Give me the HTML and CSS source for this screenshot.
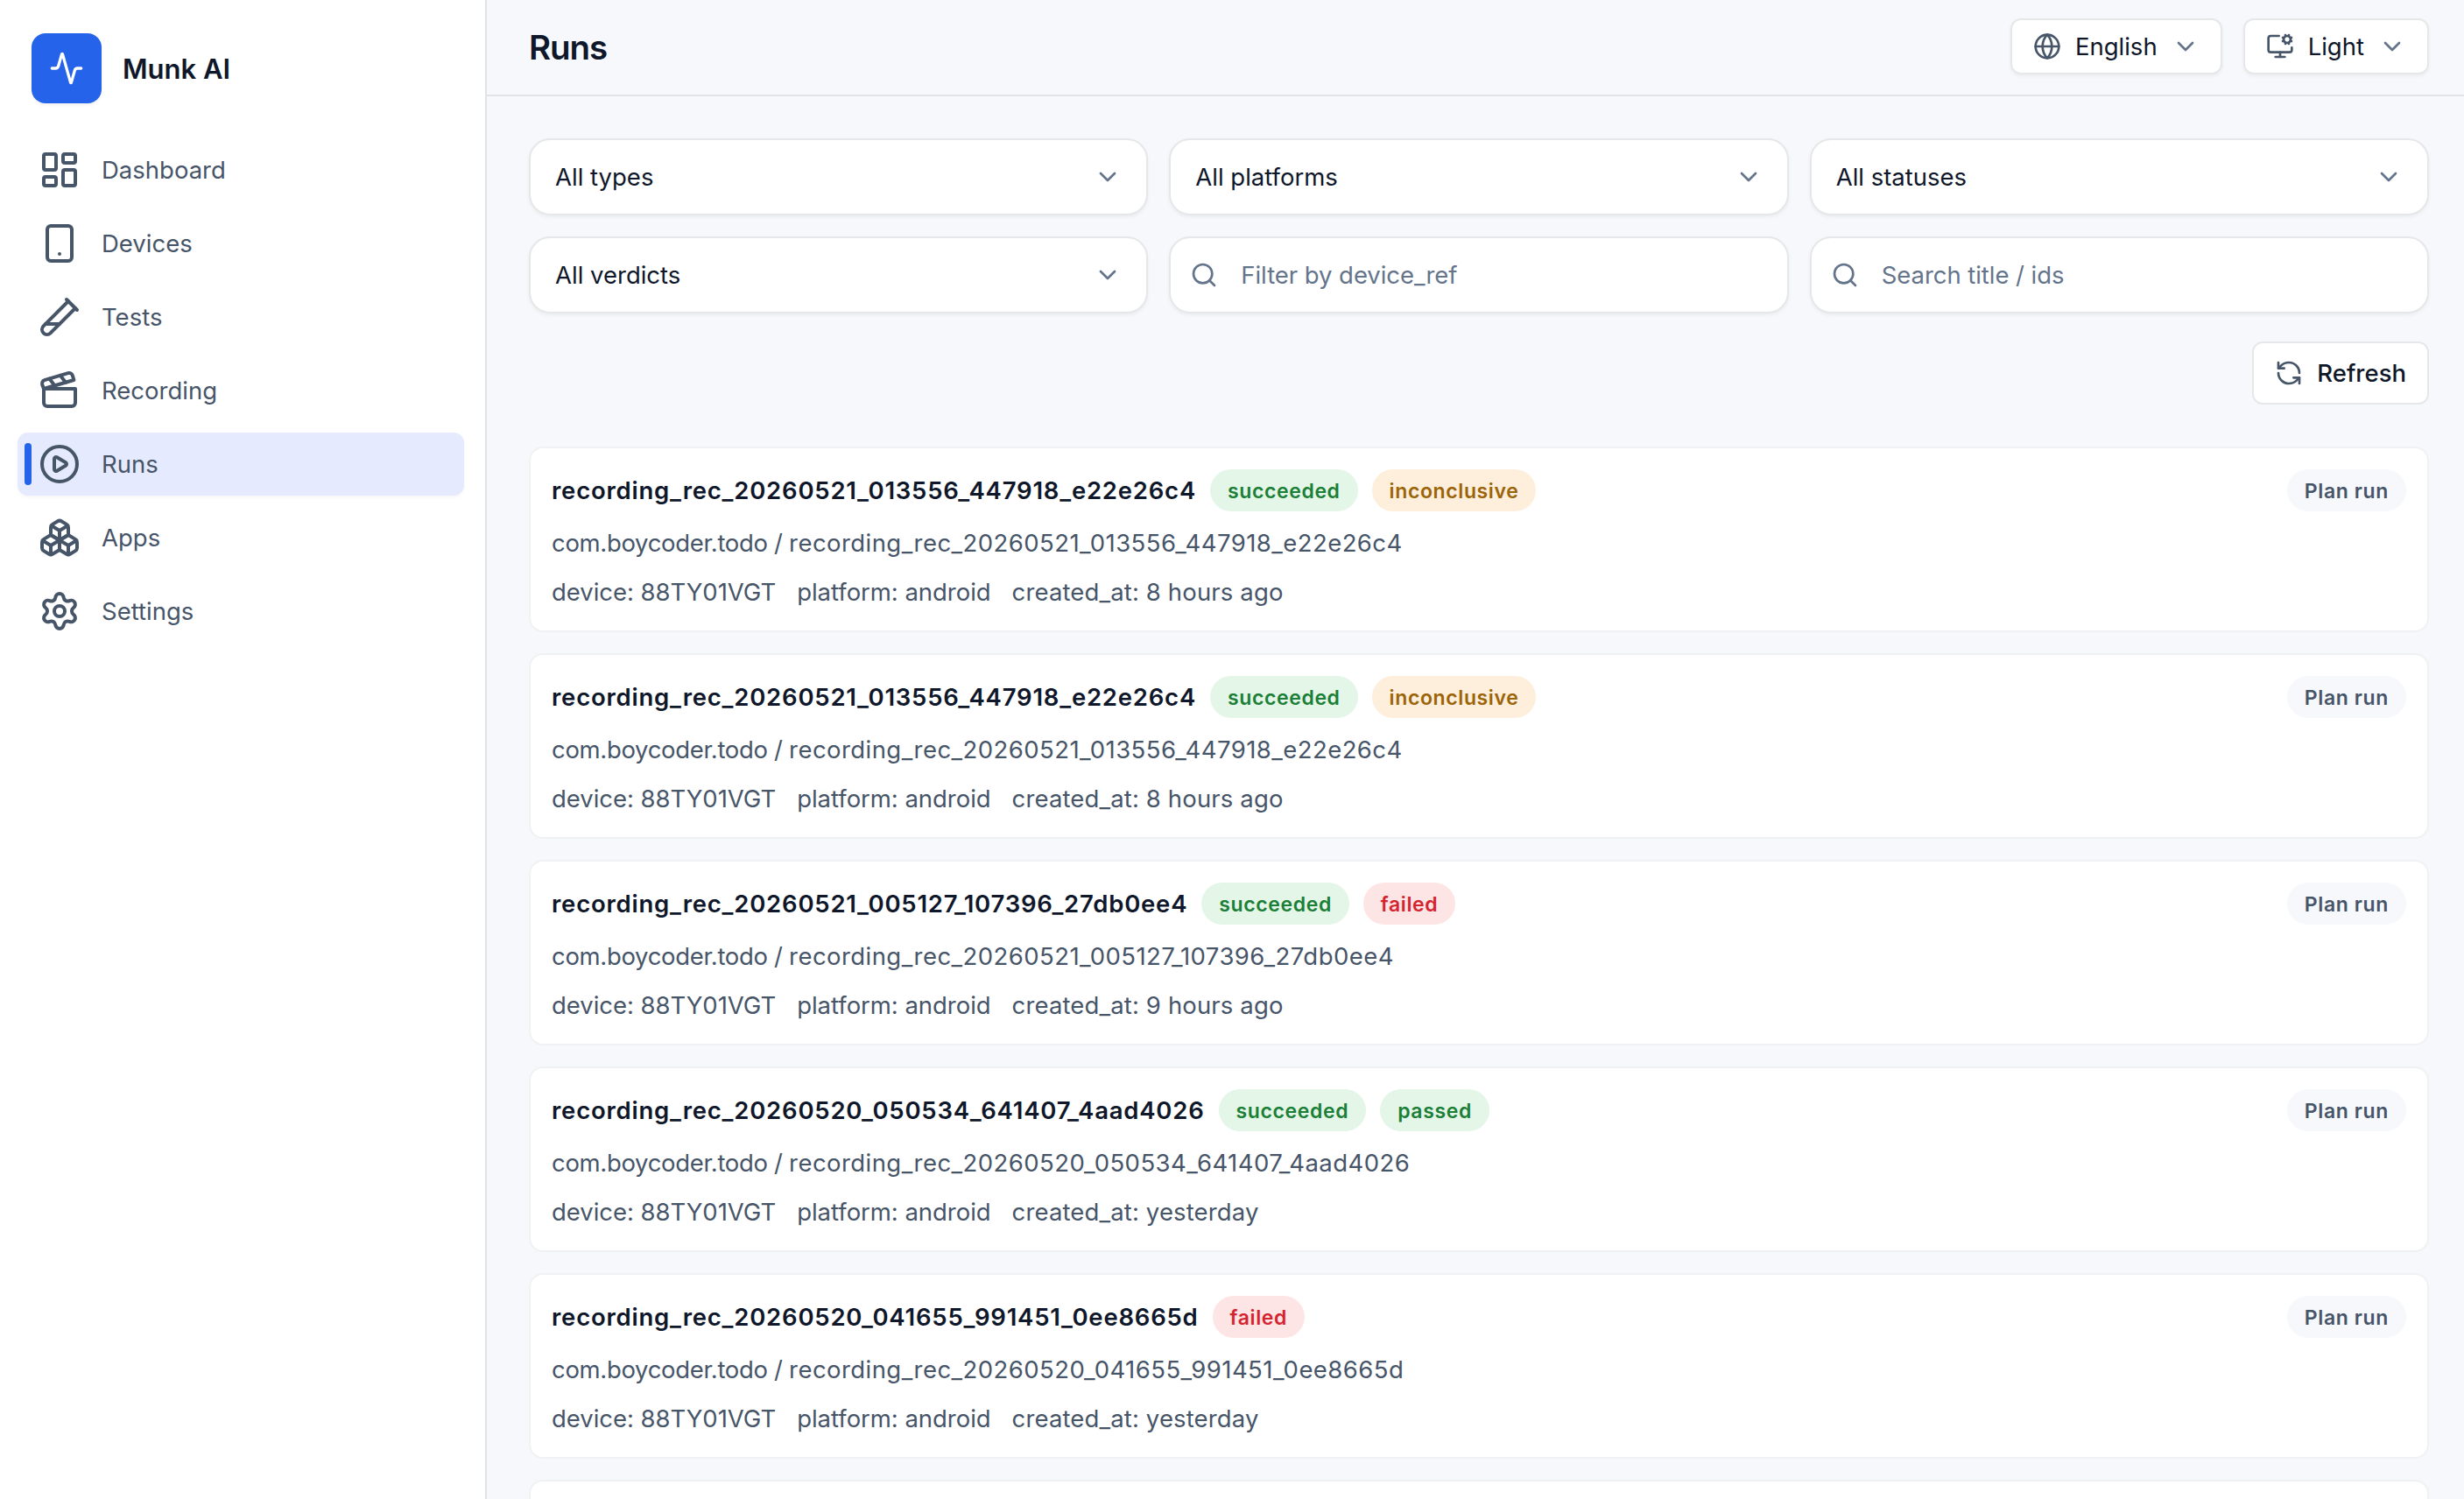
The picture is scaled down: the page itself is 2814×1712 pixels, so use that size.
FILE: index.html
```
<!DOCTYPE html>
<html lang="en">
<head>
    <meta charset="UTF-8">
    <title>Munk AI - Runs</title>
    <link rel="stylesheet" href="styles.css">
</head>
<body>
<!-- shared icons -->
<svg class="icon-defs">
    <symbol id="chevron" viewBox="0 0 24 24"><path d="m6 9 6 6 6-6"/></symbol>
    <symbol id="search" viewBox="0 0 24 24"><circle cx="11" cy="11" r="8"/><path d="m21 21-4.34-4.34"/></symbol>
</svg>

<div class="app">
    <aside class="sidebar">
        <div class="brand">
            <div class="brand-logo">
                <svg class="icon icon-logo" viewBox="0 0 24 24"><path d="M22 12h-2.48a2 2 0 0 0-1.93 1.46l-2.35 8.36a.25.25 0 0 1-.48 0L9.24 2.18a.25.25 0 0 0-.48 0l-2.35 8.36A2 2 0 0 1 4.49 12H2"/></svg>
            </div>
            <span class="brand-name">Munk AI</span>
        </div>
        <nav class="nav">
            <a class="nav-item">
                <svg class="icon icon-nav" viewBox="0 0 24 24"><rect width="7" height="9" x="3" y="3" rx="1"/><rect width="7" height="5" x="14" y="3" rx="1"/><rect width="7" height="9" x="14" y="12" rx="1"/><rect width="7" height="5" x="3" y="16" rx="1"/></svg>
                <span>Dashboard</span>
            </a>
            <a class="nav-item">
                <svg class="icon icon-nav" viewBox="0 0 24 24"><rect width="14" height="20" x="5" y="2" rx="2"/><path d="M12 18h.01"/></svg>
                <span>Devices</span>
            </a>
            <a class="nav-item">
                <svg class="icon icon-nav" viewBox="0 0 24 24"><path d="M21 7 6.82 21.18a2.83 2.83 0 0 1-3.99-.01a2.83 2.83 0 0 1 0-4L17 3"/><path d="m16 2 6 6"/><path d="M12 16H4"/></svg>
                <span>Tests</span>
            </a>
            <a class="nav-item">
                <svg class="icon icon-nav" viewBox="0 0 24 24"><path d="M20.2 6 3 11l-.9-2.4c-.3-1.1.3-2.2 1.3-2.5l13.5-4c1.1-.3 2.2.3 2.5 1.3Z"/><path d="m6.2 5.3 3.1 3.9"/><path d="m12.4 3.4 3.1 4"/><path d="M3 11h18v8a2 2 0 0 1-2 2H5a2 2 0 0 1-2-2Z"/></svg>
                <span>Recording</span>
            </a>
            <a class="nav-item active">
                <svg class="icon icon-nav" viewBox="0 0 24 24"><circle cx="12" cy="12" r="10"/><path d="M9 9.003a1 1 0 0 1 1.517-.859l4.997 2.997a1 1 0 0 1 0 1.718l-4.997 2.997A1 1 0 0 1 9 14.996z"/></svg>
                <span>Runs</span>
            </a>
            <a class="nav-item">
                <svg class="icon icon-nav" viewBox="0 0 24 24"><path d="M2.97 12.92A2 2 0 0 0 2 14.63v3.24a2 2 0 0 0 .97 1.71l3 1.8a2 2 0 0 0 2.06 0L12 19v-5.5l-5-3-4.03 2.42Z"/><path d="m7 16.5-4.74-2.85"/><path d="m7 16.5 5-3"/><path d="M7 16.5v5.17"/><path d="M12 13.5V19l3.97 2.38a2 2 0 0 0 2.06 0l3-1.8a2 2 0 0 0 .97-1.71v-3.24a2 2 0 0 0-.97-1.71L17 10.5l-5 3Z"/><path d="m17 16.5-5-3"/><path d="m17 16.5 4.74-2.85"/><path d="M17 16.5v5.17"/><path d="M7.97 4.42A2 2 0 0 0 7 6.13v4.37l5 3 5-3V6.13a2 2 0 0 0-.97-1.71l-3-1.8a2 2 0 0 0-2.06 0l-3 1.8Z"/><path d="M12 8 7.26 5.15"/><path d="m12 8 4.74-2.85"/><path d="M12 13.5V8"/></svg>
                <span>Apps</span>
            </a>
            <a class="nav-item">
                <svg class="icon icon-nav" viewBox="0 0 24 24"><path d="M9.671 4.136a2.34 2.34 0 0 1 4.659 0 2.34 2.34 0 0 0 3.319 1.915 2.34 2.34 0 0 1 2.33 4.033 2.34 2.34 0 0 0 0 3.831 2.34 2.34 0 0 1-2.33 4.033 2.34 2.34 0 0 0-3.319 1.915 2.34 2.34 0 0 1-4.659 0 2.34 2.34 0 0 0-3.32-1.915 2.34 2.34 0 0 1-2.33-4.033 2.34 2.34 0 0 0 0-3.831A2.34 2.34 0 0 1 6.35 6.051a2.34 2.34 0 0 0 3.319-1.915"/><circle cx="12" cy="12" r="3"/></svg>
                <span>Settings</span>
            </a>
        </nav>
    </aside>

    <div class="page">
        <header class="header">
            <h1>Runs</h1>
            <div class="header-actions">
                <button class="menu-btn">
                    <svg class="icon" viewBox="0 0 24 24"><circle cx="12" cy="12" r="10"/><path d="M12 2a14.5 14.5 0 0 0 0 20 14.5 14.5 0 0 0 0-20"/><path d="M2 12h20"/></svg>
                    <span>English</span>
                    <svg class="icon chevron"><use href="#chevron"/></svg>
                </button>
                <button class="menu-btn">
                    <svg class="icon" viewBox="0 0 24 24"><path d="M12 17v4"/><path d="m14.305 7.53.923-.382"/><path d="m15.228 4.852-.923-.383"/><path d="m16.852 3.228-.383-.924"/><path d="m16.852 8.772-.383.923"/><path d="m19.148 3.228.383-.924"/><path d="m19.53 9.696-.382-.924"/><path d="m20.772 4.852.924-.383"/><path d="m20.772 7.148.924.383"/><path d="M22 13v2a2 2 0 0 1-2 2H4a2 2 0 0 1-2-2V5a2 2 0 0 1 2-2h7"/><path d="M8 21h8"/><circle cx="18" cy="6" r="3"/></svg>
                    <span>Light</span>
                    <svg class="icon chevron"><use href="#chevron"/></svg>
                </button>
            </div>
        </header>

        <main class="content">
            <div class="filters">
                <div class="field select"><span>All types</span><svg class="icon chevron"><use href="#chevron"/></svg></div>
                <div class="field select"><span>All platforms</span><svg class="icon chevron"><use href="#chevron"/></svg></div>
                <div class="field select"><span>All statuses</span><svg class="icon chevron"><use href="#chevron"/></svg></div>
                <div class="field select"><span>All verdicts</span><svg class="icon chevron"><use href="#chevron"/></svg></div>
                <label class="field search"><svg class="icon"><use href="#search"/></svg><input type="text" placeholder="Filter by device_ref"></label>
                <label class="field search"><svg class="icon"><use href="#search"/></svg><input type="text" placeholder="Search title / ids"></label>
            </div>

            <div class="toolbar">
                <button class="refresh-btn">
                    <svg class="icon" viewBox="0 0 24 24"><path d="M21 12a9 9 0 0 0-9-9 9.75 9.75 0 0 0-6.74 2.74L3 8"/><path d="M3 3v5h5"/><path d="M3 12a9 9 0 0 0 9 9 9.75 9.75 0 0 0 6.74-2.74L21 16"/><path d="M16 16h5v5"/></svg>
                    <span>Refresh</span>
                </button>
            </div>

            <div class="runs">
                <div class="run">
                    <div class="run-head">
                        <span class="run-title">recording_rec_20260521_013556_447918_e22e26c4</span>
                        <span class="badge success">succeeded</span>
                        <span class="badge warning">inconclusive</span>
                        <span class="badge plan">Plan run</span>
                    </div>
                    <div class="run-path"><span class="pkg">com.boycoder.todo / </span>recording_rec_20260521_013556_447918_e22e26c4</div>
                    <div class="run-meta"><span>device: 88TY01VGT</span><span>platform: android</span><span class="created">created_at: 8 hours ago</span></div>
                </div>
                <div class="run">
                    <div class="run-head">
                        <span class="run-title">recording_rec_20260521_013556_447918_e22e26c4</span>
                        <span class="badge success">succeeded</span>
                        <span class="badge warning">inconclusive</span>
                        <span class="badge plan">Plan run</span>
                    </div>
                    <div class="run-path"><span class="pkg">com.boycoder.todo / </span>recording_rec_20260521_013556_447918_e22e26c4</div>
                    <div class="run-meta"><span>device: 88TY01VGT</span><span>platform: android</span><span class="created">created_at: 8 hours ago</span></div>
                </div>
                <div class="run">
                    <div class="run-head">
                        <span class="run-title">recording_rec_20260521_005127_107396_27db0ee4</span>
                        <span class="badge success">succeeded</span>
                        <span class="badge danger">failed</span>
                        <span class="badge plan">Plan run</span>
                    </div>
                    <div class="run-path"><span class="pkg">com.boycoder.todo / </span>recording_rec_20260521_005127_107396_27db0ee4</div>
                    <div class="run-meta"><span>device: 88TY01VGT</span><span>platform: android</span><span class="created">created_at: 9 hours ago</span></div>
                </div>
                <div class="run">
                    <div class="run-head">
                        <span class="run-title">recording_rec_20260520_050534_641407_4aad4026</span>
                        <span class="badge success">succeeded</span>
                        <span class="badge success">passed</span>
                        <span class="badge plan">Plan run</span>
                    </div>
                    <div class="run-path"><span class="pkg">com.boycoder.todo / </span>recording_rec_20260520_050534_641407_4aad4026</div>
                    <div class="run-meta"><span>device: 88TY01VGT</span><span>platform: android</span><span class="created">created_at: yesterday</span></div>
                </div>
                <div class="run">
                    <div class="run-head">
                        <span class="run-title">recording_rec_20260520_041655_991451_0ee8665d</span>
                        <span class="badge danger">failed</span>
                        <span class="badge plan">Plan run</span>
                    </div>
                    <div class="run-path"><span class="pkg">com.boycoder.todo / </span>recording_rec_20260520_041655_991451_0ee8665d</div>
                    <div class="run-meta"><span>device: 88TY01VGT</span><span>platform: android</span><span class="created">created_at: yesterday</span></div>
                </div>
                <div class="run"></div>
            </div>
        </main>
    </div>
</div>
</body>
</html>
```

FILE: styles.css
```
* { box-sizing: border-box; }
body {
    margin: 0;
    font-family: Inter, sans-serif;
    font-size: 27.5px;
    line-height: 40px;
    font-optical-sizing: none;
    color: #0f172a;
    background-color: #f7f8fc;
}
button, input {
    font: inherit;
    color: inherit;
}
.app {
    display: flex;
    height: 100vh;
    overflow: hidden;
}

/* icons */
.icon-defs {
    position: absolute;
    width: 0;
    height: 0;
}
.icon {
    flex: none;
    width: 32px;
    height: 32px;
    fill: none;
    stroke: #475569;
    stroke-width: 2;
    stroke-linecap: round;
    stroke-linejoin: round;
}
.icon-logo {
    width: 40px;
    height: 40px;
    stroke: #fff;
}
.icon-nav {
    width: 48px;
    height: 48px;
}
.chevron { stroke: #64748b; }

/* sidebar */
.sidebar {
    flex: none;
    width: 556px;
    background-color: #fff;
    border-right: 2px solid #e1e3e6;
}
.brand {
    display: flex;
    align-items: center;
    gap: 24px;
    padding: 38px 36px 40px;
}
.brand-logo {
    display: flex;
    align-items: center;
    justify-content: center;
    width: 80px;
    height: 80px;
    border-radius: 16px;
    background-color: #2563eb;
    box-shadow: 0 2px 4px rgba(0, 0, 0, 0.06);
}
.brand-name {
    padding-top: 2px;
    font-size: 31px;
    font-weight: 600;
}
.nav {
    display: flex;
    flex-direction: column;
    gap: 12px;
    padding: 0 24px 0 20px;
}
.nav-item {
    position: relative;
    display: flex;
    align-items: center;
    gap: 24px;
    height: 72px;
    padding: 0 24px;
    border-radius: 12px;
    color: #475569;
}
.nav-item.active {
    background-color: #e5eafe;
    box-shadow: 0 2px 4px rgba(0, 0, 0, 0.04);
}
.nav-item.active::before {
    content: "";
    position: absolute;
    left: 8px;
    top: 12px;
    width: 8px;
    height: 48px;
    border-radius: 4px;
    background-color: #2563eb;
}

/* header */
.page {
    flex: 1;
    min-width: 0;
}
.header {
    display: flex;
    align-items: center;
    justify-content: space-between;
    height: 110px;
    padding: 0 40px 2px 48px;
    border-bottom: 2px solid #e1e3e6;
}
h1 {
    margin: 0;
    padding-top: 2px;
    font-size: 38.5px;
    font-weight: 600;
    letter-spacing: -1.1px;
}
.header-actions {
    display: flex;
    gap: 24px;
}
.menu-btn {
    display: flex;
    align-items: center;
    gap: 16px;
    height: 64px;
    padding: 0 24px;
    border: 2px solid #e6e7e9;
    border-radius: 12px;
    background-color: #fff;
    box-shadow: 0 2px 4px rgba(0, 0, 0, 0.05);
}

/* filters */
.content { padding: 48px 40px 0 48px; }
.filters {
    display: grid;
    grid-template-columns: repeat(3, 1fr);
    gap: 24px;
}
.field {
    display: flex;
    align-items: center;
    height: 88px;
    border: 2px solid #e6e7e9;
    border-radius: 24px;
    background-color: #fff;
    box-shadow: 0 2px 4px rgba(0, 0, 0, 0.05);
}
.select {
    justify-content: space-between;
    padding: 0 28px;
}
.search {
    gap: 26px;
    padding: 0 22px;
}
.search .icon { stroke: #64748b; }
.search input {
    flex: 1;
    padding: 0;
    border: none;
    outline: none;
    background: none;
    letter-spacing: -0.05px;
}
.search input::placeholder { color: #64748b; }
.toolbar {
    display: flex;
    justify-content: flex-end;
    margin: 32px 0 48px;
}
.refresh-btn {
    display: flex;
    align-items: center;
    gap: 16px;
    height: 72px;
    padding: 0 24px;
    border: 2px solid #e6e7e9;
    border-radius: 12px;
    background-color: #fff;
    font-weight: 500;
}

/* runs list */
.runs {
    display: flex;
    flex-direction: column;
    gap: 24px;
}
.run {
    height: 212px;
    padding: 24px;
    border: 2px solid #f0f1f2;
    border-radius: 16px;
    background-color: #fff;
}
.run-head {
    display: flex;
    align-items: center;
    gap: 16px;
    height: 48px;
}
.run-title {
    font-weight: 600;
    letter-spacing: 0.78px;
}
.badge {
    height: 48px;
    padding: 0 20px;
    border-radius: 24px;
    font-size: 23px;
    line-height: 50px;
    font-weight: 600;
    letter-spacing: 0.62px;
}
.badge.success {
    background-color: #e4f6e8;
    color: #1b7f37;
}
.badge.warning {
    background-color: #fdefdc;
    color: #9c6408;
}
.badge.danger {
    background-color: #fee5e5;
    color: #d42430;
}
.badge.plan {
    margin-left: auto;
    background-color: #f7f8fc;
    color: #475569;
}
.run-path {
    margin-top: 16px;
    color: #475569;
    letter-spacing: 0.44px;
}
.pkg {
    letter-spacing: -0.32px;
}
.run-meta {
    display: flex;
    gap: 24px;
    margin-top: 16px;
    color: #475569;
    letter-spacing: -0.04px;
}
.created { letter-spacing: 0.14px; }
```
